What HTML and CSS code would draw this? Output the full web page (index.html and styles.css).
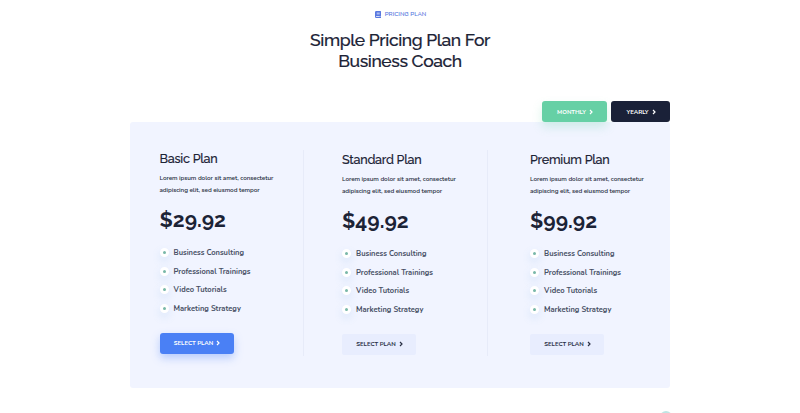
FILE: index.html
```html
<!DOCTYPE html>
<html lang="en">
  <head>
    <meta charset="UTF-8" />
    <meta name="viewport" content="width=device-width, initial-scale=1.0" />
    <title>Pricing Plan</title>
    <link rel="stylesheet" href="styles.css">
  </head>
  <body>
    <section class="pricing">
      <!-- Section title -->
      <header class="section-title">
        <p class="sub-title">
          <svg class="book" viewBox="0 0 14 16"><path fill="currentColor" fill-rule="evenodd" d="M3 0h10q1 0 1 1v10l-1 1v2h1v2H3q-3 0-3-3V3q0-3 3-3zM4 4v1h7V4zm0 2.500v1h7v-1zM3 12q-1 0-1 1t1 1h8v-2z"/></svg>
          <span>PRICING PLAN</span>
        </p>
        <h1>Simple Pricing Plan For<br />Business Coach</h1>
      </header>

      <!-- Billing period -->
      <div class="period">
        <button class="btn btn-green" type="button"><span>MONTHLY</span><svg class="arrow" viewBox="0 0 4 6"><path d="M1 1 3 3 1 5"/></svg></button>
        <button class="btn btn-dark" type="button"><span>YEARLY</span><svg class="arrow" viewBox="0 0 4 6"><path d="M1 1 3 3 1 5"/></svg></button>
      </div>

      <!-- Plans -->
      <div class="plans">
        <article class="plan basic">
          <h2>Basic Plan</h2>
          <p class="desc">Lorem ipsum dolor sit amet, consectetur<br />adipiscing elit, sed eiusmod tempor</p>
          <div class="price">$29.92</div>
          <ul>
            <li>Business Consulting</li>
            <li>Professional Trainings</li>
            <li>Video Tutorials</li>
            <li>Marketing Strategy</li>
          </ul>
          <button class="btn btn-blue" type="button"><span>SELECT PLAN</span><svg class="arrow" viewBox="0 0 4 6"><path d="M1 1 3 3 1 5"/></svg></button>
        </article>

        <article class="plan standard">
          <h2>Standard Plan</h2>
          <p class="desc">Lorem ipsum dolor sit amet, consectetur<br />adipiscing elit, sed eiusmod tempor</p>
          <div class="price">$49.92</div>
          <ul>
            <li>Business Consulting</li>
            <li>Professional Trainings</li>
            <li>Video Tutorials</li>
            <li>Marketing Strategy</li>
          </ul>
          <button class="btn btn-light" type="button"><span>SELECT PLAN</span><svg class="arrow" viewBox="0 0 4 6"><path d="M1 1 3 3 1 5"/></svg></button>
        </article>

        <article class="plan premium">
          <h2>Premium Plan</h2>
          <p class="desc">Lorem ipsum dolor sit amet, consectetur<br />adipiscing elit, sed eiusmod tempor</p>
          <div class="price">$99.92</div>
          <ul>
            <li>Business Consulting</li>
            <li>Professional Trainings</li>
            <li>Video Tutorials</li>
            <li>Marketing Strategy</li>
          </ul>
          <button class="btn btn-light" type="button"><span>SELECT PLAN</span><svg class="arrow" viewBox="0 0 4 6"><path d="M1 1 3 3 1 5"/></svg></button>
        </article>
      </div>
    </section>

    <a class="scroll-top" href="#" aria-label="Back to top"></a>
  </body>
</html>
```

FILE: styles.css
```css
/* Reset & Base Styles */
*,
*::before {
  margin: 0;
  padding: 0;
  box-sizing: border-box;
}

body {
  height: 413px;
  overflow: hidden;
  background-color: #fff;
  color: #1c2336;
  font-family: "Raleway", "Lato", sans-serif;
}

.pricing {
  width: 540px;
  margin: 0 auto;
}

/* Section Title */
.section-title {
  height: 101px;
  padding-top: 9px;
  text-align: center;
}

.sub-title {
  display: flex;
  align-items: center;
  justify-content: center;
  gap: 4px;
  height: 10px;
  padding-left: 1px;
  color: #5878e0;
  font-family: "Nunito", "Open Sans", sans-serif;
  font-size: 6px;
  font-weight: 600;
}

.book {
  width: 6px;
  height: 7px;
}

h1 {
  margin-top: 11px;
  font-size: 17.5px;
  font-weight: 500;
  line-height: 21px;
  letter-spacing: -0.4px;
  -webkit-text-stroke: 0.2px;
}

/* Buttons */
.btn {
  display: flex;
  align-items: center;
  justify-content: center;
  gap: 3px;
  height: 21px;
  padding-left: 1px;
  border: none;
  border-radius: 3px;
  color: #fff;
  font-family: "Nunito", "Open Sans", sans-serif;
  font-size: 6px;
  font-weight: 700;
  letter-spacing: -0.05px;
  cursor: pointer;
}

.arrow {
  width: 4px;
  height: 6px;
  fill: none;
  stroke: currentColor;
  stroke-width: 1.2;
}

.period {
  display: flex;
  justify-content: flex-end;
  gap: 4px;
  position: relative;
}

.btn-green {
  width: 65px;
  background-color: #66d0a5;
  box-shadow: 0 5px 10px rgba(102, 208, 165, 0.25);
}

.btn-dark {
  width: 59px;
  background-color: #1a2138;
}

.btn-blue {
  width: 74px;
  background-color: #4a80f5;
  box-shadow: 0 4px 9px rgba(74, 128, 245, 0.35);
}

.btn-light {
  width: 74px;
  border-radius: 2px;
  background-color: #e8edfe;
  color: #2a3146;
}

/* Plans */
.plans {
  display: grid;
  grid-template-columns: 174px 184px 182px;
  height: 266px;
  padding: 28px 0 32px;
  border-radius: 3px;
  background-color: #f1f4ff;
}

.plan {
  border-right: 1px solid #e7ebf9;
}

.basic {
  padding: 0 0 0 29.500px;
}

.standard {
  padding: 1px 0 0 38px;
}

.premium {
  padding: 1px 0 0 42px;
  border-right: none;
}

h2 {
  font-size: 12.6px;
  font-weight: 500;
  line-height: 17px;
  letter-spacing: -0.25px;
  -webkit-text-stroke: 0.15px;
}

.desc {
  margin-top: 5px;
  color: #262c3c;
  font-family: "Nunito", "Open Sans", sans-serif;
  font-size: 6.4px;
  font-weight: 600;
  line-height: 12px;
  letter-spacing: -0.08px;
  white-space: nowrap;
}

.price {
  margin-top: 11px;
  font-size: 21px;
  font-weight: 700;
  line-height: 26px;
}

ul {
  margin-top: 10px;
  list-style: none;
}

li {
  display: flex;
  align-items: center;
  gap: 5px;
  height: 18.700px;
  color: #485065;
  font-family: "Nunito", "Open Sans", sans-serif;
  font-size: 7.5px;
  font-weight: 700;
}

li::before {
  content: "";
  width: 9px;
  height: 9px;
  border: 3px solid #fff;
  border-radius: 50%;
  background-color: #79b8a8;
  box-shadow: 0 4px 8px rgba(100, 160, 220, 0.18);
}

.plan .btn {
  margin-top: 15px;
}

.scroll-top {
  position: absolute;
  top: 411px;
  left: 660px;
  width: 12px;
  height: 12px;
  border-radius: 50%;
  background-color: #bfe5e4;
}
```
